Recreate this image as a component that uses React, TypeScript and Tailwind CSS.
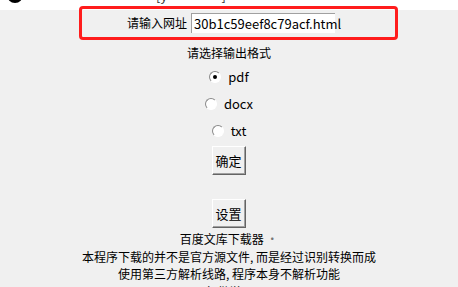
import React from "react";

const font = { fontFamily: '"Noto Sans CJK SC", "Noto Sans", sans-serif' };

function Radio({ label, checked }: { label: string; checked?: boolean }) {
  return (
    <div className="flex h-[27px] items-center justify-center gap-[7px]">
      <span className="flex h-[12px] w-[12px] items-center justify-center rounded-full border border-t-[#8a8a8a] border-l-[#8a8a8a] border-r-white border-b-white bg-white">
        {checked && <span className="h-[4px] w-[4px] rounded-full bg-black" />}
      </span>
      <span className="text-[13px] leading-none text-black">{label}</span>
    </div>
  );
}

function ClassicButton({ label }: { label: string }) {
  return (
    <button className="flex h-[29px] w-[34px] items-center justify-center border border-t-white border-l-white border-r-[#646464] border-b-[#646464] bg-[#f0f0f0] text-[13px] leading-none text-black shadow-[inset_-1px_-1px_0_#a0a0a0]">
      {label}
    </button>
  );
}

export default function App() {
  return (
    <div className="flex h-[287px] w-[458px] flex-col overflow-hidden bg-[#f0f0f0]" style={font}>
      {/* title strip, mostly scrolled out of view */}
      <div className="flex h-[10px] shrink-0 overflow-hidden bg-white">
        <div className="ml-[7px] -mt-[13px] h-[16px] w-[16px] shrink-0 rounded-full bg-black" />
        <div className="ml-[133px] -mt-[12px] flex w-[70px] justify-between text-[13px] leading-[16px] text-[#333]">
          <span>[y</span>
          <span>]</span>
        </div>
      </div>

      <div className="-mt-[4px] ml-[79px] flex h-[34px] w-[319px] shrink-0 items-center rounded-[4px] border-[3px] border-[#ff1c1c] pl-[45px]">
        <span className="text-[12px] leading-none text-black">请输入网址</span>
        <div className="ml-[4px] flex h-[20px] w-[144px] items-center border-t border-l border-t-[#a0a0a0] border-l-[#a0a0a0] bg-white pl-[2px] text-[13px] leading-none text-black">
          30b1c59eef8c79acf.html
        </div>
      </div>

      <div className="mt-[4px] flex flex-col items-center">
        <div className="h-[17px] text-[12px] leading-[17px] text-black">请选择输出格式</div>
        <div className="mt-[2px] flex flex-col">
          <Radio label="pdf" checked />
          <Radio label="docx" />
          <Radio label="txt" />
        </div>
        <div className="mt-[2px] flex flex-col items-center gap-[24px] pr-[1px]">
          <ClassicButton label="确定" />
          <ClassicButton label="设置" />
        </div>
        <div className="mt-[2px] flex flex-col items-center text-[12px] leading-[17.5px] text-black">
          <div>
            百度文库下载器 <span className="text-[#777]">·</span>
          </div>
          <div>本程序下载的并不是官方源文件, 而是经过识别转换而成</div>
          <div>使用第三方解析线路, 程序本身不解析功能</div>
          <div>仅供学习</div>
        </div>
      </div>
    </div>
  );
}
